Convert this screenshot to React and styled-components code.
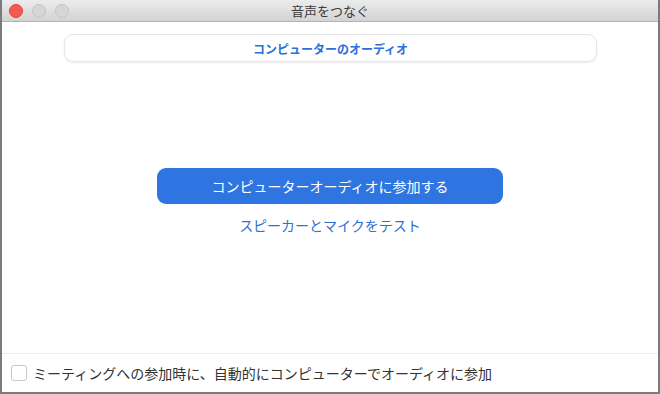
import React from 'react';
import styled, { createGlobalStyle } from 'styled-components';

const Global = createGlobalStyle`
  html, body { margin: 0; padding: 0; background: #fff; }
  body { font-family: "Noto Sans CJK JP", "Noto Sans", sans-serif; }
  * { box-sizing: border-box; }
`;

const Window = styled.div`
  width: 660px;
  height: 394px;
  display: flex;
  flex-direction: column;
  border: 2px solid #7b7b7b;
  border-top: none;
  background: #fff;
  overflow: hidden;
`;

const TitleBar = styled.div`
  height: 22px;
  flex: 0 0 22px;
  position: relative;
  display: flex;
  align-items: center;
  justify-content: center;
  background: linear-gradient(#ececec, #d3d3d3);
  border-bottom: 1px solid #b3b3b3;
  color: #3a3a3a;
  font-size: 13px;
`;

const Lights = styled.div`
  position: absolute;
  left: 7px;
  top: 4px;
  display: flex;
  gap: 9px;
`;

const Light = styled.span`
  width: 14px;
  height: 14px;
  border-radius: 50%;
  background: ${p => (p.$red ? '#f25a52' : '#d6d6d6')};
  border: 1px solid ${p => (p.$red ? '#e0443c' : '#c4c4c4')};
`;

const Body = styled.div`
  flex: 1;
  display: flex;
  flex-direction: column;
  align-items: center;
  padding-top: 12px;
`;

const Tab = styled.div`
  width: 533px;
  height: 28px;
  margin-left: 1px;
  display: flex;
  align-items: center;
  justify-content: center;
  border: 1px solid #e6e6e6;
  border-radius: 9px;
  box-shadow: 0 1px 2px rgba(0, 0, 0, 0.08);
  color: #2d6fd6;
  font-size: 12px;
  font-weight: 700;
`;

const Center = styled.div`
  display: flex;
  flex-direction: column;
  align-items: center;
  margin-top: 106px;
  gap: 11px;
`;

const JoinButton = styled.button`
  width: 346px;
  height: 36px;
  border: none;
  border-radius: 9px;
  background: #2e75e1;
  color: #fff;
  font-family: inherit;
  font-size: 14px;
  cursor: pointer;
`;

const LinkText = styled.a`
  color: #2e6fd4;
  font-size: 14px;
  text-decoration: none;
`;

const Footer = styled.div`
  height: 39px;
  flex: 0 0 39px;
  border-top: 1px solid #ececec;
  display: flex;
  align-items: center;
  padding-left: 9px;
  gap: 6px;
  color: #333;
  font-size: 14px;
`;

const Box = styled.span`
  width: 16px;
  height: 16px;
  border: 1px solid #c9c9c9;
  border-radius: 3px;
  background: #fff;
`;

export default function App() {
  return (
    <>
      <Global />
      <Window>
        <TitleBar>
          <Lights>
            <Light $red />
            <Light />
            <Light />
          </Lights>
          音声をつなぐ
        </TitleBar>
        <Body>
          <Tab>コンピューターのオーディオ</Tab>
          <Center>
            <JoinButton>コンピューターオーディオに参加する</JoinButton>
            <LinkText>スピーカーとマイクをテスト</LinkText>
          </Center>
        </Body>
        <Footer>
          <Box />
          ミーティングへの参加時に、自動的にコンピューターでオーディオに参加
        </Footer>
      </Window>
    </>
  );
}
